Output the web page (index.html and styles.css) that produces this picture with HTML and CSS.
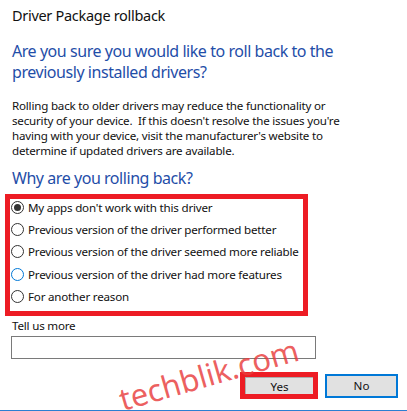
FILE: index.html
```html
<!DOCTYPE html>
<html lang="en">
<head>
<meta charset="utf-8">
<title>Driver Package rollback</title>
<link rel="stylesheet" href="styles.css">
</head>
<body>
<div class="dialog">
  <div class="title">Driver Package rollback</div>
  <h1 class="instruction">Are you sure you would like to roll back to the<br>previously installed drivers?</h1>
  <p class="info">Rolling back to older drivers may reduce the functionality or<br>security of your device.&nbsp; If this doesn't resolve the issues you're<br>having with your device, visit the manufacturer's website to<br>determine if updated drivers are available.</p>
  <h2 class="instruction why">Why are you rolling back?</h2>
  <div class="highlight reasons">
    <div class="reason-list">
      <label class="reason"><span class="radio checked"></span>My apps don't work with this driver</label>
      <label class="reason"><span class="radio"></span>Previous version of the driver performed better</label>
      <label class="reason"><span class="radio"></span>Previous version of the driver seemed more reliable</label>
      <label class="reason"><span class="radio hover"></span>Previous version of the driver had more features</label>
      <label class="reason"><span class="radio"></span>For another reason</label>
    </div>
  </div>
  <div class="more-label">Tell us more</div>
  <div class="more-input"></div>
  <div class="buttons">
    <div class="highlight yes-wrap"><button class="btn yes">Yes</button></div>
    <button class="btn no">No</button>
  </div>
  <div class="watermark">techblik.com</div>
</div>
</body>
</html>
```

FILE: styles.css
```css
html, body {
  margin: 0;
  padding: 0;
  background: #ffffff;
}
body {
  width: 407px;
  height: 411px;
  box-sizing: border-box;
  border-bottom: 1px solid #2b7fd2;
  overflow: hidden;
}
.dialog {
  position: relative;
  display: flex;
  flex-direction: column;
  padding: 5px 0 0 12px;
  font-family: "Noto Sans", "Open Sans", sans-serif;
  color: #000;
}
.title {
  font-size: 14.5px;
  line-height: 20px;
  color: #111;
  letter-spacing: -0.3px;
}
.instruction {
  margin: 16px 0 0;
  font-weight: normal;
  font-size: 16px;
  line-height: 21px;
  color: #1f4ea8;
  letter-spacing: -0.45px;
}
.info {
  margin: 15px 0 0;
  font-size: 11.6px;
  line-height: 15px;
  color: #111;
  letter-spacing: -0.2px;
}
.why {
  margin-top: 10px;
}
.highlight {
  border: 5px solid #ed1c24;
  box-sizing: border-box;
}
.reasons {
  margin: 5px 0 0 -7px;
  width: 303px;
  height: 122px;
  padding: 0 0 0 1px;
}
.reason-list {
  margin-top: -3px;
  display: flex;
  flex-direction: column;
}
.reason {
  display: flex;
  align-items: center;
  height: 22.3px;
  font-size: 11.6px;
  color: #111;
  letter-spacing: -0.2px;
  white-space: nowrap;
}
.radio {
  width: 11px;
  height: 11px;
  border: 1px solid #333;
  border-radius: 50%;
  margin-right: 4px;
  flex: none;
  display: flex;
  align-items: center;
  justify-content: center;
}
.radio.checked::after {
  content: "";
  width: 7px;
  height: 7px;
  border-radius: 50%;
  background: #333;
}
.radio.hover {
  border-color: #0078d7;
}
.more-label {
  margin-top: 2px;
  font-size: 11.6px;
  line-height: 16px;
  color: #111;
  letter-spacing: -0.2px;
}
.more-input {
  margin: 2px 0 0 -1px;
  width: 305px;
  height: 23px;
  box-sizing: border-box;
  border: 1px solid #7a7a7a;
  background: #fff;
}
.buttons {
  display: flex;
  justify-content: flex-end;
  align-items: center;
  gap: 7px;
  margin: 13px 9px 0 0;
}
.yes-wrap {
  width: 78px;
  height: 27px;
  display: flex;
}
.btn {
  font-family: "Noto Sans", "Open Sans", sans-serif;
  font-size: 11.6px;
  color: #111;
  background: #e1e1e1;
  margin: 0;
  padding: 0;
}
.yes {
  flex: 1;
  border: 1px solid #adadad;
  border-right: none;
  border-bottom: none;
}
.no {
  width: 73px;
  height: 24px;
  border: 2px solid #0078d7;
}
.watermark {
  position: absolute;
  left: 116px;
  top: 356px;
  font-size: 31px;
  line-height: 36px;
  color: rgba(232, 60, 60, 0.82);
  transform: rotate(-16deg);
  transform-origin: center;
  white-space: nowrap;
}
```
